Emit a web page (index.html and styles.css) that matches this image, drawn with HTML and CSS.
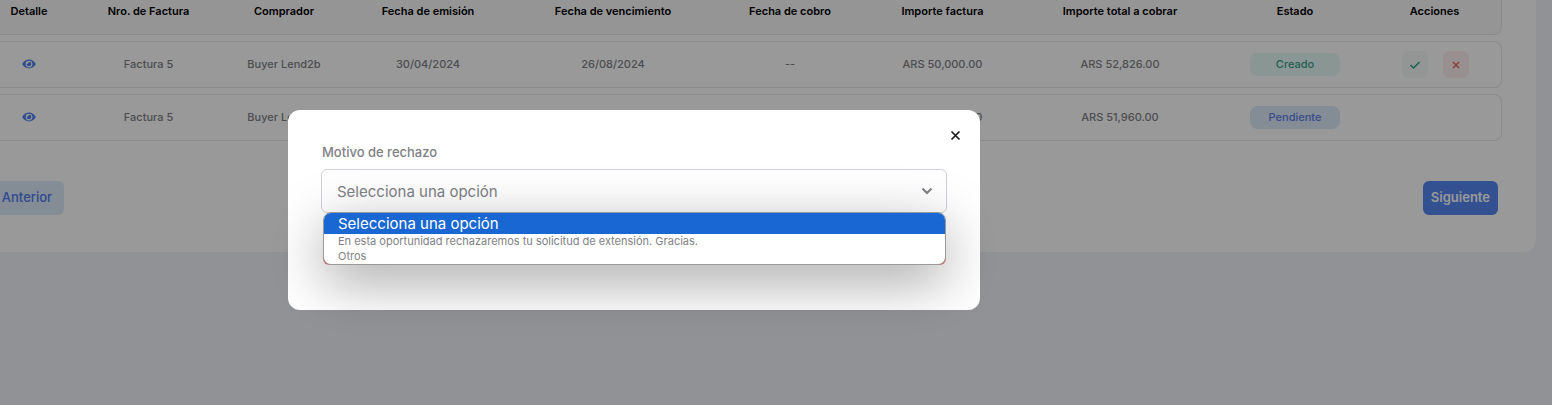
FILE: index.html
```html
<!DOCTYPE html>
<html lang="es">
<head>
    <meta charset="UTF-8">
    <meta name="viewport" content="width=device-width, initial-scale=1.0">
    <title>Facturas</title>
    <link rel="stylesheet" href="styles.css">
</head>
<body>
    <svg class="sprite" aria-hidden="true">
        <symbol id="eye" viewBox="0 0 576 512">
            <path fill="currentColor" d="M572.52 241.4C518.29 135.59 410.93 64 288 64S57.68 135.64 3.48 241.41a32.35 32.35 0 0 0 0 29.19C57.71 376.41 165.07 448 288 448s230.32-71.64 284.52-177.41a32.35 32.35 0 0 0 0-29.19zM288 400a144 144 0 1 1 144-144 143.93 143.93 0 0 1-144 144zm0-240a95.31 95.31 0 0 0-25.31 3.79 47.85 47.85 0 0 1-66.9 66.9A95.78 95.78 0 1 0 288 160z"/>
        </symbol>
    </svg>

    <main class="card">
        <table class="invoices">
            <colgroup>
                <col class="col-detail">
                <col class="col-number">
                <col class="col-buyer">
                <col class="col-issue">
                <col class="col-due">
                <col class="col-paid">
                <col class="col-amount">
                <col class="col-total">
                <col class="col-status">
                <col class="col-actions">
            </colgroup>
            <thead>
                <tr>
                    <th>Detalle</th>
                    <th>Nro. de Factura</th>
                    <th>Comprador</th>
                    <th>Fecha de emisión</th>
                    <th>Fecha de vencimiento</th>
                    <th>Fecha de cobro</th>
                    <th>Importe factura</th>
                    <th>Importe total a cobrar</th>
                    <th>Estado</th>
                    <th>Acciones</th>
                </tr>
            </thead>
            <tbody>
                <tr>
                    <td><button class="view" aria-label="Ver detalle"><svg width="14" height="12"><use href="#eye"/></svg></button></td>
                    <td>Factura 5</td>
                    <td>Buyer Lend2b</td>
                    <td>30/04/2024</td>
                    <td>26/08/2024</td>
                    <td>--</td>
                    <td>ARS 50,000.00</td>
                    <td>ARS 52,826.00</td>
                    <td><span class="badge created">Creado</span></td>
                    <td>
                        <div class="actions">
                            <button class="action accept" aria-label="Aceptar">
                                <svg width="12" height="10" viewBox="0 0 12 10"><path d="M1.5 5 4.5 8 10.5 2"/></svg>
                            </button>
                            <button class="action reject" aria-label="Rechazar">
                                <svg width="8" height="8" viewBox="0 0 8 8"><path d="M1 1 7 7M7 1 1 7"/></svg>
                            </button>
                        </div>
                    </td>
                </tr>
                <tr>
                    <td><button class="view" aria-label="Ver detalle"><svg width="14" height="12"><use href="#eye"/></svg></button></td>
                    <td>Factura 5</td>
                    <td>Buyer Lend2b</td>
                    <td></td>
                    <td></td>
                    <td></td>
                    <td>ARS 50,000.00</td>
                    <td>ARS 51,960.00</td>
                    <td><span class="badge pending">Pendiente</span></td>
                    <td></td>
                </tr>
            </tbody>
        </table>
        <nav class="pager">
            <button class="page-btn prev">Anterior</button>
            <button class="page-btn next">Siguiente</button>
        </nav>
    </main>

    <div class="overlay">
        <div class="modal" role="dialog">
            <button class="close" aria-label="Cerrar">
                <svg width="11" height="11" viewBox="0 0 11 11"><path d="M1.5 1.5 9.5 9.5M9.5 1.5 1.5 9.5"/></svg>
            </button>
            <label class="label" for="reason">Motivo de rechazo</label>
            <div class="field">
                <select class="select" id="reason">
                    <option>Selecciona una opción</option>
                </select>
                <svg class="chevron" width="12" height="8" viewBox="0 0 12 8"><path d="M1.5 1.5 6 6 10.5 1.5"/></svg>
                <div class="dropdown">
                    <ul class="options" role="listbox">
                        <li class="option selected" role="option" aria-selected="true">Selecciona una opción</li>
                        <li class="option" role="option">En esta oportunidad rechazaremos tu solicitud de extensión. Gracias.</li>
                        <li class="option" role="option">Otros</li>
                    </ul>
                </div>
            </div>
        </div>
    </div>
</body>
</html>
```
FILE: styles.css
```css
* {
    box-sizing: border-box;
}
body {
    margin: 0;
    min-height: 100vh;
    overflow: hidden;
    background: #f2f3f9;
    font-family: Inter, "Liberation Sans", sans-serif;
    font-size: 11px;
    color: #7e8186;
}
button {
    border: 0;
    padding: 0;
    font: inherit;
    cursor: pointer;
}
svg {
    display: block;
    fill: none;
}
.sprite {
    position: absolute;
    width: 0;
    height: 0;
}

/* invoice table */
.card {
    margin: -40px 16px 0 -48px;
    padding: 22px 34px 37px;
    background: #fff;
    border-radius: 12px;
}
.invoices {
    width: 100%;
    table-layout: fixed;
    border-collapse: separate;
    border-spacing: 0 6px;
    text-align: center;
}
.col-detail { width: 86px; }
.col-number { width: 153px; }
.col-buyer { width: 118px; }
.col-issue { width: 170px; }
.col-due { width: 200px; }
.col-paid { width: 154px; }
.col-amount { width: 151px; }
.col-status { width: 146px; }
.col-actions { width: 134px; }
.invoices th,
.invoices td {
    height: 47px;
    padding: 0 0 2px;
    border: 1px solid #e6e6e8;
    border-width: 1px 0;
    font-weight: 500;
}
.invoices th {
    background: #f8f8f8;
    color: #000;
    font-weight: 600;
}
.invoices td:nth-child(n+9) {
    padding: 0;
}
.invoices th:last-child,
.invoices td:last-child {
    border-right-width: 1px;
    border-radius: 0 8px 8px 0;
}
.view {
    display: block;
    margin: 0 auto;
    background: none;
    color: #5080ee;
}
.badge {
    display: block;
    width: 90px;
    margin: 0 auto;
    border-radius: 8px;
    line-height: 23px;
}
.created {
    background: #e6faf5;
    color: #37a08a;
}
.pending {
    background: #dce9fa;
    color: #6080e8;
}
.actions {
    display: flex;
    justify-content: center;
    gap: 15px;
    padding-left: 2px;
}
.action {
    display: flex;
    align-items: center;
    justify-content: center;
    width: 26px;
    height: 27px;
    border-radius: 6px;
    stroke-width: 1.5;
}
.accept {
    background: #f5faf8;
    stroke: #27a08a;
}
.reject {
    background: #fdf0f0;
    stroke: #ee6666;
}
.pager {
    display: flex;
    justify-content: space-between;
    margin-top: 34px;
    padding: 0 4px;
}
.page-btn {
    min-width: 74px;
    height: 34px;
    padding: 0 8px 2px;
    border-radius: 6px;
    font-size: 13px;
    font-weight: 500;
}
.prev {
    background: #dcebfb;
    color: #5078ee;
}
.next {
    background: #5585f0;
    color: #fff;
    font-weight: 600;
}

/* modal */
.overlay {
    position: fixed;
    inset: 0 0 0 -284px;
    display: flex;
    justify-content: center;
    align-items: flex-start;
    padding-top: 110px;
    background: rgba(0, 0, 0, 0.4);
}
.modal {
    position: relative;
    width: 692px;
    padding: 34px 33px 97px;
    background: #fff;
    border-radius: 12px;
}
.close {
    position: absolute;
    top: 20px;
    right: 19px;
    background: none;
    stroke: #1b1b1f;
    stroke-width: 1.7;
}
.label {
    display: block;
    padding: 0 1px 8px;
    font-size: 13px;
    font-weight: 500;
    line-height: 17px;
}
.field {
    position: relative;
}
.select {
    display: block;
    width: 100%;
    height: 44px;
    padding: 0 15px;
    appearance: none;
    background: #fff;
    border: 1px solid #d2d2dc;
    border-radius: 6px;
    color: #7e8186;
    font: 400 15px Inter, "Liberation Sans", sans-serif;
}
.chevron {
    position: absolute;
    top: 18px;
    right: 14px;
    stroke: #7e8186;
    stroke-width: 2;
}
.dropdown {
    position: absolute;
    top: 43px;
    left: 2px;
    right: 1px;
    border-radius: 8px 8px 6px 6px;
    background: linear-gradient(transparent 80%, #d07070 80%);
    box-shadow: 0 16px 56px rgba(0, 0, 0, 0.36);
}
.options {
    margin: 0;
    padding: 0;
    list-style: none;
    overflow: hidden;
    background: #fff;
    border: 1px solid #9a9a9a;
    border-radius: 8px;
}
.option {
    padding: 0 14px;
    line-height: 15px;
}
.selected {
    background: #1967d2;
    color: #fff;
    font-size: 15px;
    line-height: 21px;
}
```
